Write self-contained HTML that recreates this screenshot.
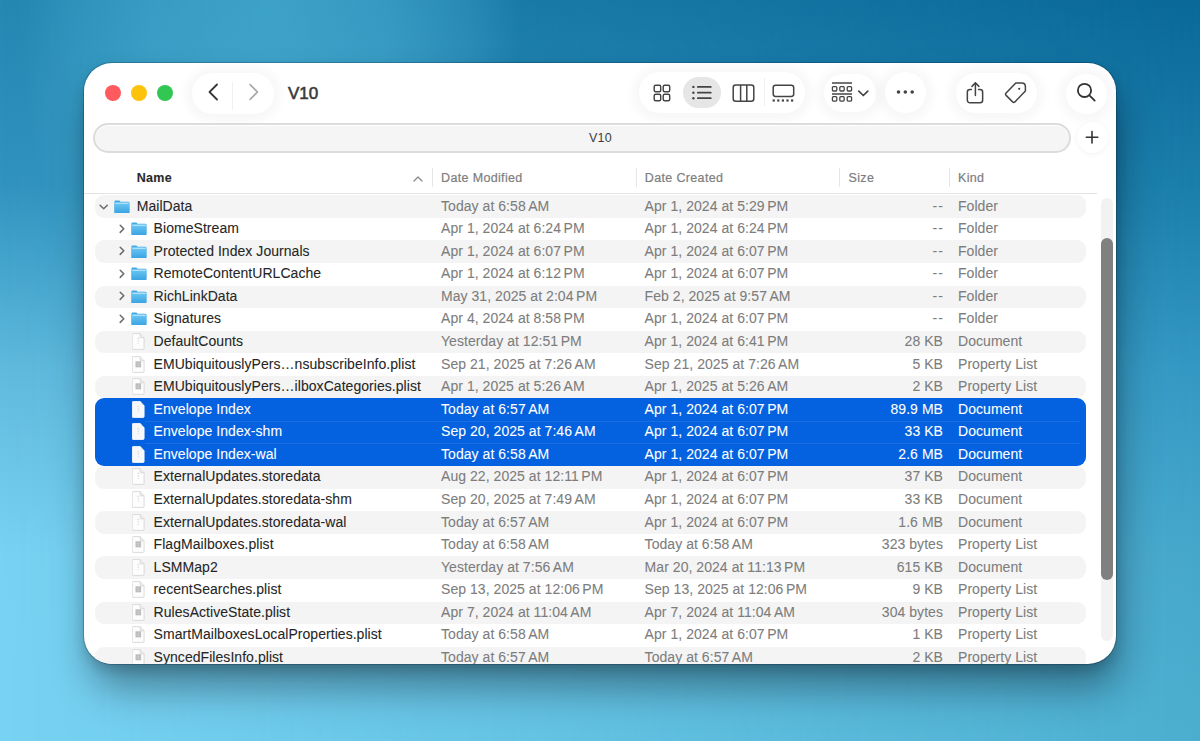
<!DOCTYPE html>
<html><head><meta charset="utf-8">
<style>
html,body{margin:0;padding:0;width:1200px;height:741px;overflow:hidden}
body{position:relative;font-family:"Liberation Sans",sans-serif;
 background:linear-gradient(to bottom,#2488b2 0px,#3194bf 185px,#60bade 370px,#78d2f2 555px,#78d3f3 741px);}
#bgR{position:absolute;left:0;top:0;width:1200px;height:741px;
 background:linear-gradient(to bottom,#0a6899 0px,#1a7eab 185px,#3398c2 370px,#46a7cb 555px,#4caecf 741px);
 -webkit-mask-image:linear-gradient(to right,transparent,#000);mask-image:linear-gradient(to right,transparent,#000);}
#bgL{position:absolute;left:0;top:0;width:1200px;height:741px;background:radial-gradient(ellipse 250px 450px at 270px 0px,rgba(90,192,225,0.52) 0%,rgba(90,192,225,0.4) 48%,rgba(90,192,225,0.2) 80%,rgba(90,192,225,0) 100%)}
.win{position:absolute;left:84px;top:63px;width:1032px;height:601px;border-radius:28px;background:#fff;overflow:hidden;
 box-shadow:5px 26px 40px -4px rgba(0,10,20,0.42),0 6px 12px rgba(0,10,20,0.16),0 0 0 1px rgba(0,20,40,0.22);}
.abs{position:absolute}
.light{position:absolute;width:16px;height:16px;border-radius:50%;top:21.8px}
.pill{position:absolute;background:#fff;border-radius:22px;box-shadow:0 1px 10px 7px rgba(0,0,0,0.032)}
.title{position:absolute;left:204px;top:20px;font-weight:normal;font-size:17px;color:#383838;-webkit-text-stroke:0.55px #383838;line-height:22px}
.path{position:absolute;left:9px;top:60px;width:973.5px;height:26px;border:2px solid #dcdcdc;border-radius:16px;background:#f5f5f5;box-shadow:inset 0 1px 0 #fff}
.path span{position:absolute;left:0;right:0;top:6px;text-align:center;font-size:12.5px;color:#3c3c3c;line-height:15px;letter-spacing:0.2px}
.hdr{position:absolute;top:107.5px;font-size:12.5px;color:#7d7d7d;letter-spacing:0.35px;line-height:15px;-webkit-text-stroke:0.2px #7d7d7d}
.sep{position:absolute;top:105px;width:1px;height:19px;background:#e6e6e6}
.row{position:absolute;left:11px;width:991px;height:22.57px}
.row.alt{background:#f4f4f4;border-radius:9px}
.row.sel{color:#fff}
.selblk{position:absolute;left:11px;width:991px;background:#0462e0;border-radius:9px}
.selsep{position:absolute;left:61px;width:935px;height:1px;background:#1c6ee4}
.t{position:absolute;top:-0.7px;line-height:22.57px;font-size:14px;letter-spacing:0.05px;white-space:pre;-webkit-text-stroke:0.08px currentColor}
.nm{color:#262626}
.c2{color:#7d7d7d}
.r{text-align:right}
.sel .t{color:#fff}
.ns{display:inline-block;width:2.5px}
.ic{display:block}
.disc{display:block}
.scrolltrack{position:absolute;left:1017px;top:135px;width:12px;height:443px;border-radius:6px;background:#f2f2f2}
.scrollthumb{position:absolute;left:1017px;top:175px;width:12px;height:342px;border-radius:6px;background:#808080}
</style></head><body>
<div id="bgR"></div><div id="bgL"></div>
<div class="win">
  <!-- traffic lights -->
  <div class="light" style="left:20.8px;background:#ff5b5f"></div>
  <div class="light" style="left:46.7px;background:#fdc20c"></div>
  <div class="light" style="left:72.7px;background:#32c653"></div>
  <!-- nav pill -->
  <div class="pill" style="left:108px;top:9.5px;width:82px;height:41px;border-radius:21px"></div>
  <div class="abs" style="left:147.5px;top:19px;width:1px;height:28px;background:#f0f0f0"></div>
  <svg class="abs" style="left:122px;top:20px" width="14" height="18" viewBox="0 0 14 18"><path d="M11 1.5 3.5 9 11 16.5" stroke="#363636" stroke-width="1.8" fill="none" stroke-linecap="round" stroke-linejoin="round"/></svg>
  <svg class="abs" style="left:163px;top:20px" width="14" height="18" viewBox="0 0 14 18"><path d="M3 1.5 10.5 9 3 16.5" stroke="#a5a5a5" stroke-width="1.6" fill="none" stroke-linecap="round" stroke-linejoin="round"/></svg>
  <div class="title">V10</div>
    <!-- view pill -->
  <div class="pill" style="left:555px;top:8.5px;width:166px;height:41px"></div>
  <div class="abs" style="left:598.8px;top:13.6px;width:38px;height:31.3px;border-radius:16px;background:#e6e6e6"></div>
  <svg class="abs" style="left:568.5px;top:20.5px" width="19" height="19" viewBox="0 0 19 19"><g fill="none" stroke="#444" stroke-width="1.45"><rect x="1.2" y="1.2" width="6.5" height="6.5" rx="1.5"/><rect x="10.2" y="1.2" width="6.5" height="6.5" rx="1.5"/><rect x="1.2" y="10.2" width="6.5" height="6.5" rx="1.5"/><rect x="10.2" y="10.2" width="6.5" height="6.5" rx="1.5"/></g></svg>
  <svg class="abs" style="left:607px;top:21px" width="22" height="16" viewBox="0 0 22 16"><g stroke="#444" stroke-width="1.7" stroke-linecap="round"><path d="M6.8 2.9h13M6.8 8.7h13M6.8 14.2h13"/></g><g fill="#444"><circle cx="2.4" cy="2.9" r="1.2"/><circle cx="2.4" cy="8.7" r="1.2"/><circle cx="2.4" cy="14.2" r="1.2"/></g></svg>
  <svg class="abs" style="left:648.4px;top:20.6px" width="24" height="19" viewBox="0 0 24 19"><g fill="none" stroke="#444" stroke-width="1.5"><rect x="1.2" y="1" width="20.6" height="16.2" rx="2.5"/><path d="M8.6 1v16.2M14.8 1v16.2"/></g></svg>
  <div class="abs" style="left:680px;top:15px;width:1px;height:28px;background:#efefef"></div>
  <svg class="abs" style="left:688.2px;top:20.5px" width="24" height="19" viewBox="0 0 24 19"><rect x="1.2" y="1.2" width="20.5" height="11.3" rx="2.4" fill="none" stroke="#444" stroke-width="1.5"/><g fill="#444"><rect x="0.6" y="15.4" width="2.2" height="2.2"/><rect x="5.2" y="15.4" width="2.2" height="2.2"/><rect x="9.8" y="15.4" width="2.2" height="2.2"/><rect x="14.4" y="15.4" width="2.2" height="2.2"/><rect x="19" y="15.4" width="2.2" height="2.2"/></g></svg>
  <!-- group pill -->
  <div class="pill" style="left:740px;top:11px;width:52px;height:38px;border-radius:19px"></div>
  <svg class="abs" style="left:747px;top:19px" width="22" height="21" viewBox="0 0 22 21"><g fill="none" stroke="#444"><path d="M1 1h20" stroke-width="1.5"/><path d="M1 11.9h20" stroke-width="1.5"/><g stroke-width="1.3"><rect x="1.4" y="4.6" width="4.4" height="4.4" rx="1"/><rect x="8.8" y="4.6" width="4.4" height="4.4" rx="1"/><rect x="16.2" y="4.6" width="4.4" height="4.4" rx="1"/><rect x="1.4" y="14.7" width="4.4" height="4.4" rx="1"/><rect x="8.8" y="14.7" width="4.4" height="4.4" rx="1"/><rect x="16.2" y="14.7" width="4.4" height="4.4" rx="1"/></g></g></svg>
  <svg class="abs" style="left:773.3px;top:25.5px" width="13" height="9" viewBox="0 0 13 9"><path d="M1.8 2.2 6.3 6.5 10.8 2.2" stroke="#444" stroke-width="1.7" fill="none" stroke-linecap="round" stroke-linejoin="round"/></svg>
  <!-- more -->
  <div class="pill" style="left:801px;top:9px;width:41px;height:41px;border-radius:50%"></div>
  <svg class="abs" style="left:811.2px;top:26.2px" width="21" height="6" viewBox="0 0 21 6"><g fill="#444"><circle cx="3.5" cy="3" r="1.8"/><circle cx="10.3" cy="3" r="1.8"/><circle cx="17.2" cy="3" r="1.8"/></g></svg>
  <!-- share/tag pill -->
  <div class="pill" style="left:872px;top:9.5px;width:81px;height:40px;border-radius:20px"></div>
  <svg class="abs" style="left:880px;top:18px" width="22" height="24" viewBox="0 0 22 24"><g transform="translate(11.4 12) scale(1.02) translate(-11.4 -12)"><g fill="none" stroke="#444" stroke-width="1.5" stroke-linecap="round" stroke-linejoin="round"><path d="M11.4 2v12.5M8 5.5l3.4-3.5 3.4 3.5"/><path d="M7.5 8.5H6a2.5 2.5 0 0 0-2.5 2.5v8a2.5 2.5 0 0 0 2.5 2.5h10a2.5 2.5 0 0 0 2.5-2.5v-8A2.5 2.5 0 0 0 16 8.5h-1.5"/></g></g></svg>
  <svg class="abs" style="left:919px;top:18px" width="25" height="25" viewBox="0 0 25 25"><path d="M12.8 2H18.7Q22.4 2 22.4 5.7V9.9L11.9 20.9Q10.75 22 9.6 20.9L3.1 14.4Q2 13.25 3.1 12.1Z" fill="none" stroke="#444" stroke-width="1.5" stroke-linejoin="round"/><circle cx="16.2" cy="7.8" r="1.1" fill="#444"/></svg>
  <!-- search -->
  <div class="pill" style="left:982px;top:10.5px;width:41px;height:40px;border-radius:50%"></div>
  <svg class="abs" style="left:992px;top:19px" width="21" height="21" viewBox="0 0 21 21"><g fill="none" stroke="#333" stroke-width="1.8" stroke-linecap="round"><circle cx="8.5" cy="8.4" r="6.6"/><path d="M13.4 13.3l5.3 5.3"/></g></svg>

  <div class="path"><span style="left:494px;right:auto">V10</span></div>
  <div class="abs" style="left:992.5px;top:59px;width:31px;height:31px;border-radius:50%;background:#fff;box-shadow:0 1px 5px rgba(0,0,0,0.06)"></div>
  <svg class="abs" style="left:1001px;top:67px" width="14" height="14" viewBox="0 0 14 14"><path d="M7 1.5v11.5M1.3 7.2h11.5" stroke="#333" stroke-width="1.6" stroke-linecap="round"/></svg>
  <!-- header -->
  <div class="hdr" style="left:52.7px;font-weight:bold;color:#222;letter-spacing:0.3px">Name</div>
  <svg class="abs" style="left:329px;top:113px" width="10" height="6" viewBox="0 0 10 6"><path d="M1 5 5 1 9 5" stroke="#8a8a8a" stroke-width="1.3" fill="none" stroke-linecap="round" stroke-linejoin="round"/></svg>
  <div class="sep" style="left:348px"></div>
  <div class="hdr" style="left:357px">Date Modified</div>
  <div class="sep" style="left:552px"></div>
  <div class="hdr" style="left:560.8px">Date Created</div>
  <div class="sep" style="left:754.5px"></div>
  <div class="hdr" style="left:764.5px">Size</div>
  <div class="sep" style="left:864.5px"></div>
  <div class="hdr" style="left:874px">Kind</div>
  <div class="abs" style="left:0;top:130px;width:1013px;height:1px;background:#e3e3e3"></div>
  <div class="selblk" style="top:335.43px;height:67.71000000000001px"></div><div class="selsep" style="top:357.5px"></div><div class="selsep" style="top:380.07000000000005px"></div>
<div class="row alt" style="top:132.3px"><span style="position:absolute;left:4px;top:8.7px"><svg class="disc" width="10" height="7" viewBox="0 0 10 7"><path d="M1.1 1.2l3.6 3.6 3.6-3.6" stroke="#6b6b6b" stroke-width="1.5" fill="none" stroke-linecap="round" stroke-linejoin="round"/></svg></span><span style="position:absolute;left:18.5px;top:4.3px"><svg class="ic" width="16" height="13.6" viewBox="0 0 17 14" preserveAspectRatio="none"><defs><linearGradient id="fg" x1="0" y1="0" x2="0" y2="1"><stop offset="0" stop-color="#6cc8f4"/><stop offset="1" stop-color="#3aa3e2"/></linearGradient></defs><path d="M1.5 0.5h4.2l1.3 1.2h8.3a1 1 0 0 1 1 1V12.5a1 1 0 0 1-1 1H1.5a1 1 0 0 1-1-1V1.5a1 1 0 0 1 1-1z" fill="#3fa9e6"/><rect x="0.5" y="2.6" width="16" height="10.9" rx="1.2" fill="url(#fg)"/><rect x="1.5" y="2.8" width="14" height="1" fill="#d9f1fd" opacity="0.9"/></svg></span><span class="t nm" style="left:41.69999999999999px">MailData</span><span class="t c2" style="left:346px">Today at 6:58<span class=ns></span>AM</span><span class="t c2" style="left:549.6px">Apr 1, 2024 at 5:29<span class=ns></span>PM</span><span class="t c2 r" style="right:143px"><span style="letter-spacing:1.2px;margin-right:-1.2px">--</span></span><span class="t c2" style="left:863px">Folder</span></div>
<div class="row" style="top:154.87px"><span style="position:absolute;left:23.5px;top:5.7px"><svg class="disc" width="7" height="10" viewBox="0 0 7 10"><path d="M1.2 1.2l3.6 3.6-3.6 3.6" stroke="#6b6b6b" stroke-width="1.5" fill="none" stroke-linecap="round" stroke-linejoin="round"/></svg></span><span style="position:absolute;left:35.5px;top:4.3px"><svg class="ic" width="16" height="13.6" viewBox="0 0 17 14" preserveAspectRatio="none"><defs><linearGradient id="fg" x1="0" y1="0" x2="0" y2="1"><stop offset="0" stop-color="#6cc8f4"/><stop offset="1" stop-color="#3aa3e2"/></linearGradient></defs><path d="M1.5 0.5h4.2l1.3 1.2h8.3a1 1 0 0 1 1 1V12.5a1 1 0 0 1-1 1H1.5a1 1 0 0 1-1-1V1.5a1 1 0 0 1 1-1z" fill="#3fa9e6"/><rect x="0.5" y="2.6" width="16" height="10.9" rx="1.2" fill="url(#fg)"/><rect x="1.5" y="2.8" width="14" height="1" fill="#d9f1fd" opacity="0.9"/></svg></span><span class="t nm" style="left:58.599999999999994px">BiomeStream</span><span class="t c2" style="left:346px">Apr 1, 2024 at 6:24<span class=ns></span>PM</span><span class="t c2" style="left:549.6px">Apr 1, 2024 at 6:24<span class=ns></span>PM</span><span class="t c2 r" style="right:143px"><span style="letter-spacing:1.2px;margin-right:-1.2px">--</span></span><span class="t c2" style="left:863px">Folder</span></div>
<div class="row alt" style="top:177.44px"><span style="position:absolute;left:23.5px;top:5.7px"><svg class="disc" width="7" height="10" viewBox="0 0 7 10"><path d="M1.2 1.2l3.6 3.6-3.6 3.6" stroke="#6b6b6b" stroke-width="1.5" fill="none" stroke-linecap="round" stroke-linejoin="round"/></svg></span><span style="position:absolute;left:35.5px;top:4.3px"><svg class="ic" width="16" height="13.6" viewBox="0 0 17 14" preserveAspectRatio="none"><defs><linearGradient id="fg" x1="0" y1="0" x2="0" y2="1"><stop offset="0" stop-color="#6cc8f4"/><stop offset="1" stop-color="#3aa3e2"/></linearGradient></defs><path d="M1.5 0.5h4.2l1.3 1.2h8.3a1 1 0 0 1 1 1V12.5a1 1 0 0 1-1 1H1.5a1 1 0 0 1-1-1V1.5a1 1 0 0 1 1-1z" fill="#3fa9e6"/><rect x="0.5" y="2.6" width="16" height="10.9" rx="1.2" fill="url(#fg)"/><rect x="1.5" y="2.8" width="14" height="1" fill="#d9f1fd" opacity="0.9"/></svg></span><span class="t nm" style="left:58.599999999999994px">Protected Index Journals</span><span class="t c2" style="left:346px">Apr 1, 2024 at 6:07<span class=ns></span>PM</span><span class="t c2" style="left:549.6px">Apr 1, 2024 at 6:07<span class=ns></span>PM</span><span class="t c2 r" style="right:143px"><span style="letter-spacing:1.2px;margin-right:-1.2px">--</span></span><span class="t c2" style="left:863px">Folder</span></div>
<div class="row" style="top:200.01px"><span style="position:absolute;left:23.5px;top:5.7px"><svg class="disc" width="7" height="10" viewBox="0 0 7 10"><path d="M1.2 1.2l3.6 3.6-3.6 3.6" stroke="#6b6b6b" stroke-width="1.5" fill="none" stroke-linecap="round" stroke-linejoin="round"/></svg></span><span style="position:absolute;left:35.5px;top:4.3px"><svg class="ic" width="16" height="13.6" viewBox="0 0 17 14" preserveAspectRatio="none"><defs><linearGradient id="fg" x1="0" y1="0" x2="0" y2="1"><stop offset="0" stop-color="#6cc8f4"/><stop offset="1" stop-color="#3aa3e2"/></linearGradient></defs><path d="M1.5 0.5h4.2l1.3 1.2h8.3a1 1 0 0 1 1 1V12.5a1 1 0 0 1-1 1H1.5a1 1 0 0 1-1-1V1.5a1 1 0 0 1 1-1z" fill="#3fa9e6"/><rect x="0.5" y="2.6" width="16" height="10.9" rx="1.2" fill="url(#fg)"/><rect x="1.5" y="2.8" width="14" height="1" fill="#d9f1fd" opacity="0.9"/></svg></span><span class="t nm" style="left:58.599999999999994px">RemoteContentURLCache</span><span class="t c2" style="left:346px">Apr 1, 2024 at 6:12<span class=ns></span>PM</span><span class="t c2" style="left:549.6px">Apr 1, 2024 at 6:07<span class=ns></span>PM</span><span class="t c2 r" style="right:143px"><span style="letter-spacing:1.2px;margin-right:-1.2px">--</span></span><span class="t c2" style="left:863px">Folder</span></div>
<div class="row alt" style="top:222.58000000000004px"><span style="position:absolute;left:23.5px;top:5.7px"><svg class="disc" width="7" height="10" viewBox="0 0 7 10"><path d="M1.2 1.2l3.6 3.6-3.6 3.6" stroke="#6b6b6b" stroke-width="1.5" fill="none" stroke-linecap="round" stroke-linejoin="round"/></svg></span><span style="position:absolute;left:35.5px;top:4.3px"><svg class="ic" width="16" height="13.6" viewBox="0 0 17 14" preserveAspectRatio="none"><defs><linearGradient id="fg" x1="0" y1="0" x2="0" y2="1"><stop offset="0" stop-color="#6cc8f4"/><stop offset="1" stop-color="#3aa3e2"/></linearGradient></defs><path d="M1.5 0.5h4.2l1.3 1.2h8.3a1 1 0 0 1 1 1V12.5a1 1 0 0 1-1 1H1.5a1 1 0 0 1-1-1V1.5a1 1 0 0 1 1-1z" fill="#3fa9e6"/><rect x="0.5" y="2.6" width="16" height="10.9" rx="1.2" fill="url(#fg)"/><rect x="1.5" y="2.8" width="14" height="1" fill="#d9f1fd" opacity="0.9"/></svg></span><span class="t nm" style="left:58.599999999999994px">RichLinkData</span><span class="t c2" style="left:346px">May 31, 2025 at 2:04<span class=ns></span>PM</span><span class="t c2" style="left:549.6px">Feb 2, 2025 at 9:57<span class=ns></span>AM</span><span class="t c2 r" style="right:143px"><span style="letter-spacing:1.2px;margin-right:-1.2px">--</span></span><span class="t c2" style="left:863px">Folder</span></div>
<div class="row" style="top:245.14999999999998px"><span style="position:absolute;left:23.5px;top:5.7px"><svg class="disc" width="7" height="10" viewBox="0 0 7 10"><path d="M1.2 1.2l3.6 3.6-3.6 3.6" stroke="#6b6b6b" stroke-width="1.5" fill="none" stroke-linecap="round" stroke-linejoin="round"/></svg></span><span style="position:absolute;left:35.5px;top:4.3px"><svg class="ic" width="16" height="13.6" viewBox="0 0 17 14" preserveAspectRatio="none"><defs><linearGradient id="fg" x1="0" y1="0" x2="0" y2="1"><stop offset="0" stop-color="#6cc8f4"/><stop offset="1" stop-color="#3aa3e2"/></linearGradient></defs><path d="M1.5 0.5h4.2l1.3 1.2h8.3a1 1 0 0 1 1 1V12.5a1 1 0 0 1-1 1H1.5a1 1 0 0 1-1-1V1.5a1 1 0 0 1 1-1z" fill="#3fa9e6"/><rect x="0.5" y="2.6" width="16" height="10.9" rx="1.2" fill="url(#fg)"/><rect x="1.5" y="2.8" width="14" height="1" fill="#d9f1fd" opacity="0.9"/></svg></span><span class="t nm" style="left:58.599999999999994px">Signatures</span><span class="t c2" style="left:346px">Apr 4, 2024 at 8:58<span class=ns></span>PM</span><span class="t c2" style="left:549.6px">Apr 1, 2024 at 6:07<span class=ns></span>PM</span><span class="t c2 r" style="right:143px"><span style="letter-spacing:1.2px;margin-right:-1.2px">--</span></span><span class="t c2" style="left:863px">Folder</span></div>
<div class="row alt" style="top:267.72px"><span style="position:absolute;left:37.30000000000001px;top:2.3px"><svg class="ic" width="13" height="17" viewBox="0 0 14 17" preserveAspectRatio="none"><path d="M1.2 0.6h7.6l4.2 4.2v10.6a1 1 0 0 1-1 1H1.2a1 1 0 0 1-1-1V1.6a1 1 0 0 1 1-1z" fill="#fdfdfd" stroke="#d6d6d6" stroke-width="0.9"/><path d="M8.8 0.6v3.2a1 1 0 0 0 1 1h3.2" fill="#eaeaea" stroke="#d6d6d6" stroke-width="0.9"/><path d="M5.8 5.6 q1.2-1 2.2 0.2 M6.8 7.3v1.5 M6.8 10v0.8" stroke="#c8c8c8" stroke-width="0.8" fill="none"/></svg></span><span class="t nm" style="left:58.599999999999994px">DefaultCounts</span><span class="t c2" style="left:346px">Yesterday at 12:51<span class=ns></span>PM</span><span class="t c2" style="left:549.6px">Apr 1, 2024 at 6:41<span class=ns></span>PM</span><span class="t c2 r" style="right:143px">28 KB</span><span class="t c2" style="left:863px">Document</span></div>
<div class="row" style="top:290.29px"><span style="position:absolute;left:37.30000000000001px;top:2.3px"><svg class="ic" width="13" height="17" viewBox="0 0 14 17" preserveAspectRatio="none"><path d="M1.2 0.6h7.6l4.2 4.2v10.6a1 1 0 0 1-1 1H1.2a1 1 0 0 1-1-1V1.6a1 1 0 0 1 1-1z" fill="#fdfdfd" stroke="#d6d6d6" stroke-width="0.9"/><path d="M8.8 0.6v3.2a1 1 0 0 0 1 1h3.2" fill="#eaeaea" stroke="#d6d6d6" stroke-width="0.9"/><rect x="3.8" y="5.3" width="6" height="6" fill="#bababa"/><path d="M3.8 7.3h6M3.8 9.3h6M6.8 5.3v6" stroke="#d4d4d4" stroke-width="0.5"/></svg></span><span class="t nm" style="left:58.599999999999994px">EMUbiquitouslyPers…nsubscribeInfo.plist</span><span class="t c2" style="left:346px">Sep 21, 2025 at 7:26<span class=ns></span>AM</span><span class="t c2" style="left:549.6px">Sep 21, 2025 at 7:26<span class=ns></span>AM</span><span class="t c2 r" style="right:143px">5 KB</span><span class="t c2" style="left:863px">Property List</span></div>
<div class="row alt" style="top:312.86px"><span style="position:absolute;left:37.30000000000001px;top:2.3px"><svg class="ic" width="13" height="17" viewBox="0 0 14 17" preserveAspectRatio="none"><path d="M1.2 0.6h7.6l4.2 4.2v10.6a1 1 0 0 1-1 1H1.2a1 1 0 0 1-1-1V1.6a1 1 0 0 1 1-1z" fill="#fdfdfd" stroke="#d6d6d6" stroke-width="0.9"/><path d="M8.8 0.6v3.2a1 1 0 0 0 1 1h3.2" fill="#eaeaea" stroke="#d6d6d6" stroke-width="0.9"/><rect x="3.8" y="5.3" width="6" height="6" fill="#bababa"/><path d="M3.8 7.3h6M3.8 9.3h6M6.8 5.3v6" stroke="#d4d4d4" stroke-width="0.5"/></svg></span><span class="t nm" style="left:58.599999999999994px">EMUbiquitouslyPers…ilboxCategories.plist</span><span class="t c2" style="left:346px">Apr 1, 2025 at 5:26<span class=ns></span>AM</span><span class="t c2" style="left:549.6px">Apr 1, 2025 at 5:26<span class=ns></span>AM</span><span class="t c2 r" style="right:143px">2 KB</span><span class="t c2" style="left:863px">Property List</span></div>
<div class="row sel" style="top:335.43px"><span style="position:absolute;left:37.30000000000001px;top:2.3px"><svg class="ic" width="13" height="17" viewBox="0 0 14 17" preserveAspectRatio="none"><path d="M1.2 0.6h7.6l4.2 4.2v10.6a1 1 0 0 1-1 1H1.2a1 1 0 0 1-1-1V1.6a1 1 0 0 1 1-1z" fill="#f6f8fc" stroke="#ffffff" stroke-width="0.9"/><path d="M8.8 0.6v3.2a1 1 0 0 0 1 1h3.2" fill="#eaeaea" stroke="#ffffff" stroke-width="0.9"/><path d="M5.8 5.6 q1.2-1 2.2 0.2 M6.8 7.3v1.5 M6.8 10v0.8" stroke="#c8c8c8" stroke-width="0.8" fill="none"/></svg></span><span class="t nm" style="left:58.599999999999994px">Envelope Index</span><span class="t c2" style="left:346px">Today at 6:57<span class=ns></span>AM</span><span class="t c2" style="left:549.6px">Apr 1, 2024 at 6:07<span class=ns></span>PM</span><span class="t c2 r" style="right:143px">89.9 MB</span><span class="t c2" style="left:863px">Document</span></div>
<div class="row sel" style="top:358.0px"><span style="position:absolute;left:37.30000000000001px;top:2.3px"><svg class="ic" width="13" height="17" viewBox="0 0 14 17" preserveAspectRatio="none"><path d="M1.2 0.6h7.6l4.2 4.2v10.6a1 1 0 0 1-1 1H1.2a1 1 0 0 1-1-1V1.6a1 1 0 0 1 1-1z" fill="#f6f8fc" stroke="#ffffff" stroke-width="0.9"/><path d="M8.8 0.6v3.2a1 1 0 0 0 1 1h3.2" fill="#eaeaea" stroke="#ffffff" stroke-width="0.9"/><path d="M5.8 5.6 q1.2-1 2.2 0.2 M6.8 7.3v1.5 M6.8 10v0.8" stroke="#c8c8c8" stroke-width="0.8" fill="none"/></svg></span><span class="t nm" style="left:58.599999999999994px">Envelope Index-shm</span><span class="t c2" style="left:346px">Sep 20, 2025 at 7:46<span class=ns></span>AM</span><span class="t c2" style="left:549.6px">Apr 1, 2024 at 6:07<span class=ns></span>PM</span><span class="t c2 r" style="right:143px">33 KB</span><span class="t c2" style="left:863px">Document</span></div>
<div class="row sel" style="top:380.57000000000005px"><span style="position:absolute;left:37.30000000000001px;top:2.3px"><svg class="ic" width="13" height="17" viewBox="0 0 14 17" preserveAspectRatio="none"><path d="M1.2 0.6h7.6l4.2 4.2v10.6a1 1 0 0 1-1 1H1.2a1 1 0 0 1-1-1V1.6a1 1 0 0 1 1-1z" fill="#f6f8fc" stroke="#ffffff" stroke-width="0.9"/><path d="M8.8 0.6v3.2a1 1 0 0 0 1 1h3.2" fill="#eaeaea" stroke="#ffffff" stroke-width="0.9"/><path d="M5.8 5.6 q1.2-1 2.2 0.2 M6.8 7.3v1.5 M6.8 10v0.8" stroke="#c8c8c8" stroke-width="0.8" fill="none"/></svg></span><span class="t nm" style="left:58.599999999999994px">Envelope Index-wal</span><span class="t c2" style="left:346px">Today at 6:58<span class=ns></span>AM</span><span class="t c2" style="left:549.6px">Apr 1, 2024 at 6:07<span class=ns></span>PM</span><span class="t c2 r" style="right:143px">2.6 MB</span><span class="t c2" style="left:863px">Document</span></div>
<div class="row alt" style="top:403.14000000000004px"><span style="position:absolute;left:37.30000000000001px;top:2.3px"><svg class="ic" width="13" height="17" viewBox="0 0 14 17" preserveAspectRatio="none"><path d="M1.2 0.6h7.6l4.2 4.2v10.6a1 1 0 0 1-1 1H1.2a1 1 0 0 1-1-1V1.6a1 1 0 0 1 1-1z" fill="#fdfdfd" stroke="#d6d6d6" stroke-width="0.9"/><path d="M8.8 0.6v3.2a1 1 0 0 0 1 1h3.2" fill="#eaeaea" stroke="#d6d6d6" stroke-width="0.9"/><path d="M5.8 5.6 q1.2-1 2.2 0.2 M6.8 7.3v1.5 M6.8 10v0.8" stroke="#c8c8c8" stroke-width="0.8" fill="none"/></svg></span><span class="t nm" style="left:58.599999999999994px">ExternalUpdates.storedata</span><span class="t c2" style="left:346px">Aug 22, 2025 at 12:11<span class=ns></span>PM</span><span class="t c2" style="left:549.6px">Apr 1, 2024 at 6:07<span class=ns></span>PM</span><span class="t c2 r" style="right:143px">37 KB</span><span class="t c2" style="left:863px">Document</span></div>
<div class="row" style="top:425.71000000000004px"><span style="position:absolute;left:37.30000000000001px;top:2.3px"><svg class="ic" width="13" height="17" viewBox="0 0 14 17" preserveAspectRatio="none"><path d="M1.2 0.6h7.6l4.2 4.2v10.6a1 1 0 0 1-1 1H1.2a1 1 0 0 1-1-1V1.6a1 1 0 0 1 1-1z" fill="#fdfdfd" stroke="#d6d6d6" stroke-width="0.9"/><path d="M8.8 0.6v3.2a1 1 0 0 0 1 1h3.2" fill="#eaeaea" stroke="#d6d6d6" stroke-width="0.9"/><path d="M5.8 5.6 q1.2-1 2.2 0.2 M6.8 7.3v1.5 M6.8 10v0.8" stroke="#c8c8c8" stroke-width="0.8" fill="none"/></svg></span><span class="t nm" style="left:58.599999999999994px">ExternalUpdates.storedata-shm</span><span class="t c2" style="left:346px">Sep 20, 2025 at 7:49<span class=ns></span>AM</span><span class="t c2" style="left:549.6px">Apr 1, 2024 at 6:07<span class=ns></span>PM</span><span class="t c2 r" style="right:143px">33 KB</span><span class="t c2" style="left:863px">Document</span></div>
<div class="row alt" style="top:448.28000000000003px"><span style="position:absolute;left:37.30000000000001px;top:2.3px"><svg class="ic" width="13" height="17" viewBox="0 0 14 17" preserveAspectRatio="none"><path d="M1.2 0.6h7.6l4.2 4.2v10.6a1 1 0 0 1-1 1H1.2a1 1 0 0 1-1-1V1.6a1 1 0 0 1 1-1z" fill="#fdfdfd" stroke="#d6d6d6" stroke-width="0.9"/><path d="M8.8 0.6v3.2a1 1 0 0 0 1 1h3.2" fill="#eaeaea" stroke="#d6d6d6" stroke-width="0.9"/><path d="M5.8 5.6 q1.2-1 2.2 0.2 M6.8 7.3v1.5 M6.8 10v0.8" stroke="#c8c8c8" stroke-width="0.8" fill="none"/></svg></span><span class="t nm" style="left:58.599999999999994px">ExternalUpdates.storedata-wal</span><span class="t c2" style="left:346px">Today at 6:57<span class=ns></span>AM</span><span class="t c2" style="left:549.6px">Apr 1, 2024 at 6:07<span class=ns></span>PM</span><span class="t c2 r" style="right:143px">1.6 MB</span><span class="t c2" style="left:863px">Document</span></div>
<div class="row" style="top:470.85px"><span style="position:absolute;left:37.30000000000001px;top:2.3px"><svg class="ic" width="13" height="17" viewBox="0 0 14 17" preserveAspectRatio="none"><path d="M1.2 0.6h7.6l4.2 4.2v10.6a1 1 0 0 1-1 1H1.2a1 1 0 0 1-1-1V1.6a1 1 0 0 1 1-1z" fill="#fdfdfd" stroke="#d6d6d6" stroke-width="0.9"/><path d="M8.8 0.6v3.2a1 1 0 0 0 1 1h3.2" fill="#eaeaea" stroke="#d6d6d6" stroke-width="0.9"/><rect x="3.8" y="5.3" width="6" height="6" fill="#bababa"/><path d="M3.8 7.3h6M3.8 9.3h6M6.8 5.3v6" stroke="#d4d4d4" stroke-width="0.5"/></svg></span><span class="t nm" style="left:58.599999999999994px">FlagMailboxes.plist</span><span class="t c2" style="left:346px">Today at 6:58<span class=ns></span>AM</span><span class="t c2" style="left:549.6px">Today at 6:58<span class=ns></span>AM</span><span class="t c2 r" style="right:143px">323 bytes</span><span class="t c2" style="left:863px">Property List</span></div>
<div class="row alt" style="top:493.4200000000001px"><span style="position:absolute;left:37.30000000000001px;top:2.3px"><svg class="ic" width="13" height="17" viewBox="0 0 14 17" preserveAspectRatio="none"><path d="M1.2 0.6h7.6l4.2 4.2v10.6a1 1 0 0 1-1 1H1.2a1 1 0 0 1-1-1V1.6a1 1 0 0 1 1-1z" fill="#fdfdfd" stroke="#d6d6d6" stroke-width="0.9"/><path d="M8.8 0.6v3.2a1 1 0 0 0 1 1h3.2" fill="#eaeaea" stroke="#d6d6d6" stroke-width="0.9"/><path d="M5.8 5.6 q1.2-1 2.2 0.2 M6.8 7.3v1.5 M6.8 10v0.8" stroke="#c8c8c8" stroke-width="0.8" fill="none"/></svg></span><span class="t nm" style="left:58.599999999999994px">LSMMap2</span><span class="t c2" style="left:346px">Yesterday at 7:56<span class=ns></span>AM</span><span class="t c2" style="left:549.6px">Mar 20, 2024 at 11:13<span class=ns></span>PM</span><span class="t c2 r" style="right:143px">615 KB</span><span class="t c2" style="left:863px">Document</span></div>
<div class="row" style="top:515.99px"><span style="position:absolute;left:37.30000000000001px;top:2.3px"><svg class="ic" width="13" height="17" viewBox="0 0 14 17" preserveAspectRatio="none"><path d="M1.2 0.6h7.6l4.2 4.2v10.6a1 1 0 0 1-1 1H1.2a1 1 0 0 1-1-1V1.6a1 1 0 0 1 1-1z" fill="#fdfdfd" stroke="#d6d6d6" stroke-width="0.9"/><path d="M8.8 0.6v3.2a1 1 0 0 0 1 1h3.2" fill="#eaeaea" stroke="#d6d6d6" stroke-width="0.9"/><rect x="3.8" y="5.3" width="6" height="6" fill="#bababa"/><path d="M3.8 7.3h6M3.8 9.3h6M6.8 5.3v6" stroke="#d4d4d4" stroke-width="0.5"/></svg></span><span class="t nm" style="left:58.599999999999994px">recentSearches.plist</span><span class="t c2" style="left:346px">Sep 13, 2025 at 12:06<span class=ns></span>PM</span><span class="t c2" style="left:549.6px">Sep 13, 2025 at 12:06<span class=ns></span>PM</span><span class="t c2 r" style="right:143px">9 KB</span><span class="t c2" style="left:863px">Property List</span></div>
<div class="row alt" style="top:538.56px"><span style="position:absolute;left:37.30000000000001px;top:2.3px"><svg class="ic" width="13" height="17" viewBox="0 0 14 17" preserveAspectRatio="none"><path d="M1.2 0.6h7.6l4.2 4.2v10.6a1 1 0 0 1-1 1H1.2a1 1 0 0 1-1-1V1.6a1 1 0 0 1 1-1z" fill="#fdfdfd" stroke="#d6d6d6" stroke-width="0.9"/><path d="M8.8 0.6v3.2a1 1 0 0 0 1 1h3.2" fill="#eaeaea" stroke="#d6d6d6" stroke-width="0.9"/><rect x="3.8" y="5.3" width="6" height="6" fill="#bababa"/><path d="M3.8 7.3h6M3.8 9.3h6M6.8 5.3v6" stroke="#d4d4d4" stroke-width="0.5"/></svg></span><span class="t nm" style="left:58.599999999999994px">RulesActiveState.plist</span><span class="t c2" style="left:346px">Apr 7, 2024 at 11:04<span class=ns></span>AM</span><span class="t c2" style="left:549.6px">Apr 7, 2024 at 11:04<span class=ns></span>AM</span><span class="t c2 r" style="right:143px">304 bytes</span><span class="t c2" style="left:863px">Property List</span></div>
<div class="row" style="top:561.13px"><span style="position:absolute;left:37.30000000000001px;top:2.3px"><svg class="ic" width="13" height="17" viewBox="0 0 14 17" preserveAspectRatio="none"><path d="M1.2 0.6h7.6l4.2 4.2v10.6a1 1 0 0 1-1 1H1.2a1 1 0 0 1-1-1V1.6a1 1 0 0 1 1-1z" fill="#fdfdfd" stroke="#d6d6d6" stroke-width="0.9"/><path d="M8.8 0.6v3.2a1 1 0 0 0 1 1h3.2" fill="#eaeaea" stroke="#d6d6d6" stroke-width="0.9"/><rect x="3.8" y="5.3" width="6" height="6" fill="#bababa"/><path d="M3.8 7.3h6M3.8 9.3h6M6.8 5.3v6" stroke="#d4d4d4" stroke-width="0.5"/></svg></span><span class="t nm" style="left:58.599999999999994px">SmartMailboxesLocalProperties.plist</span><span class="t c2" style="left:346px">Today at 6:58<span class=ns></span>AM</span><span class="t c2" style="left:549.6px">Apr 1, 2024 at 6:07<span class=ns></span>PM</span><span class="t c2 r" style="right:143px">1 KB</span><span class="t c2" style="left:863px">Property List</span></div>
<div class="row alt" style="top:583.7px"><span style="position:absolute;left:37.30000000000001px;top:2.3px"><svg class="ic" width="13" height="17" viewBox="0 0 14 17" preserveAspectRatio="none"><path d="M1.2 0.6h7.6l4.2 4.2v10.6a1 1 0 0 1-1 1H1.2a1 1 0 0 1-1-1V1.6a1 1 0 0 1 1-1z" fill="#fdfdfd" stroke="#d6d6d6" stroke-width="0.9"/><path d="M8.8 0.6v3.2a1 1 0 0 0 1 1h3.2" fill="#eaeaea" stroke="#d6d6d6" stroke-width="0.9"/><rect x="3.8" y="5.3" width="6" height="6" fill="#bababa"/><path d="M3.8 7.3h6M3.8 9.3h6M6.8 5.3v6" stroke="#d4d4d4" stroke-width="0.5"/></svg></span><span class="t nm" style="left:58.599999999999994px">SyncedFilesInfo.plist</span><span class="t c2" style="left:346px">Today at 6:57<span class=ns></span>AM</span><span class="t c2" style="left:549.6px">Today at 6:57<span class=ns></span>AM</span><span class="t c2 r" style="right:143px">2 KB</span><span class="t c2" style="left:863px">Property List</span></div>
  <div class="scrolltrack"></div>
  <div class="scrollthumb"></div>
</div>
</body></html>
